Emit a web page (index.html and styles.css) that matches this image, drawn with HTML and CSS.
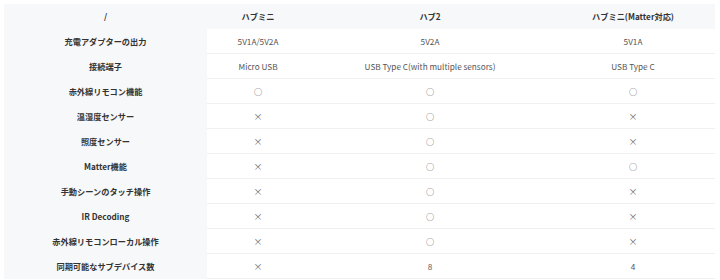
FILE: index.html
```html
<!DOCTYPE html>
<html lang="ja">
<head>
<meta charset="utf-8">
<link rel="stylesheet" href="styles.css">
</head>
<body>
<table class="spec">
  <thead>
    <tr><th class="label">/</th><th>ハブミニ</th><th>ハブ2</th><th>ハブミニ(Matter対応)</th></tr>
  </thead>
  <tbody>
    <tr><th class="label">充電アダプターの出力</th><td>5V1A/5V2A</td><td>5V2A</td><td>5V1A</td></tr>
    <tr><th class="label">接続端子</th><td>Micro USB</td><td>USB Type C(with multiple sensors)</td><td>USB Type C</td></tr>
    <tr><th class="label">赤外線リモコン機能</th><td>○</td><td>○</td><td>○</td></tr>
    <tr><th class="label">温湿度センサー</th><td class="no">×</td><td>○</td><td class="no">×</td></tr>
    <tr><th class="label">照度センサー</th><td class="no">×</td><td>○</td><td class="no">×</td></tr>
    <tr><th class="label">Matter機能</th><td class="no">×</td><td>○</td><td>○</td></tr>
    <tr><th class="label">手動シーンのタッチ操作</th><td class="no">×</td><td>○</td><td class="no">×</td></tr>
    <tr><th class="label">IR Decoding</th><td class="no">×</td><td>○</td><td class="no">×</td></tr>
    <tr><th class="label">赤外線リモコンローカル操作</th><td class="no">×</td><td>○</td><td class="no">×</td></tr>
    <tr><th class="label">同期可能なサブデバイス数</th><td class="no">×</td><td>8</td><td>4</td></tr>
  </tbody>
</table>
</body>
</html>
```
FILE: styles.css
```css
html, body {
  margin: 0;
  background: #ffffff;
}
body {
  padding: 4px 5px 0 4px;
  font-family: "Noto Sans CJK JP", "Noto Sans", sans-serif;
  font-size: 8.2px;
  color: #555;
}
.spec {
  width: 711px;
  border-collapse: collapse;
  table-layout: fixed;
}
.spec th, .spec td {
  height: 24px;
  padding: 0 4px;
  text-align: center;
  vertical-align: middle;
  border-bottom: 1px solid #f0f0f0;
  white-space: nowrap;
}
.spec thead th {
  background: #f7f8fa;
  font-weight: 700;
  color: #333;
  border-bottom-color: #f7f8fa;
}
.spec th.label {
  width: 195px;
  background: #f7f8fa;
  font-weight: 700;
  color: #333;
  border-bottom-color: #f7f8fa;
}
.spec thead th:nth-child(2) { width: 94px; }
.spec thead th:nth-child(3) { width: 234px; }
.spec td {
  font-weight: 400;
  color: #555;
}
.spec td.no {
  font-size: 9px;
  color: #666;
}
```
